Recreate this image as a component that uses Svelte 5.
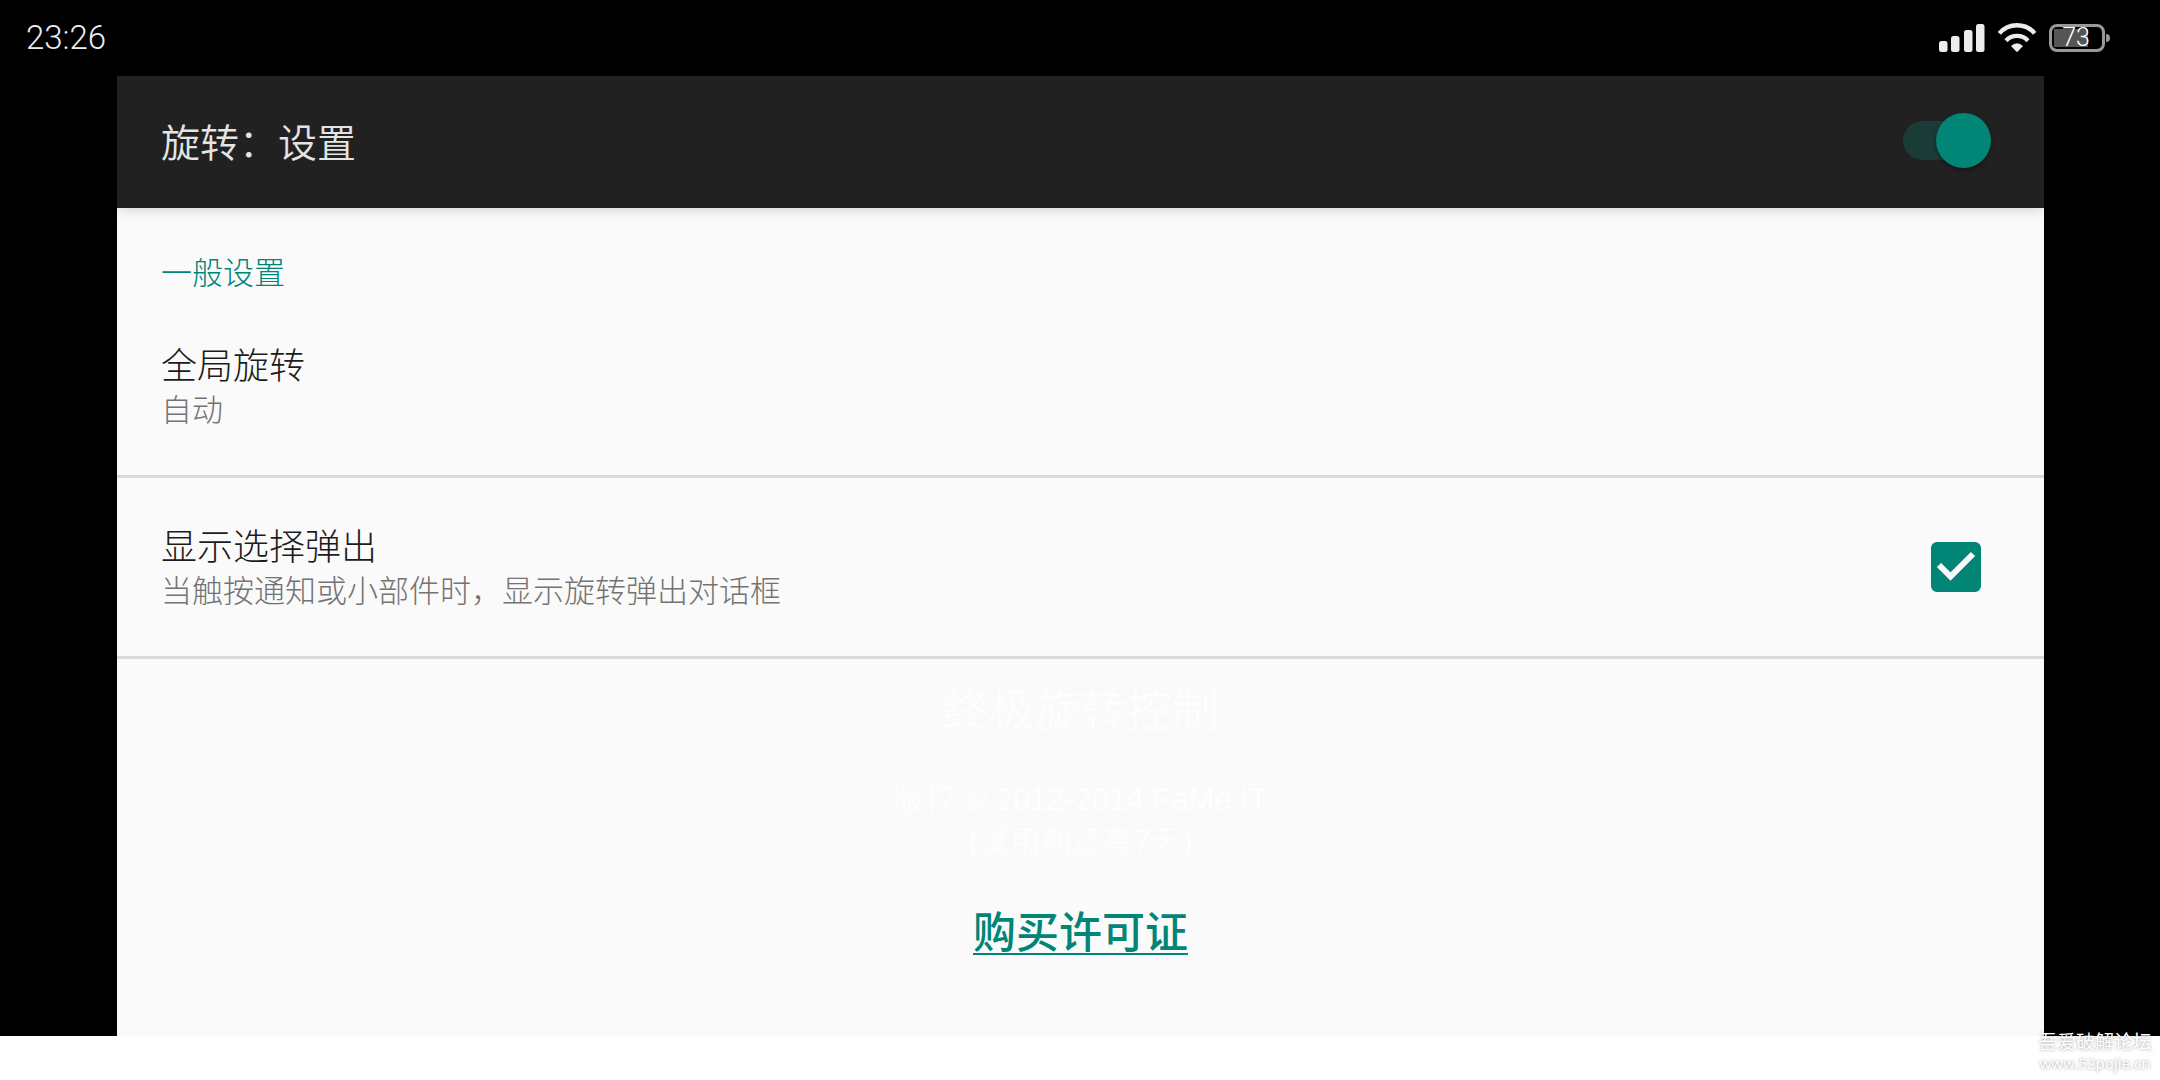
<script>
  let enabled = $state(true);
  let showPopup = $state(true);
  const bars = [
    { x: 0, y: 17, h: 11 },
    { x: 12, y: 12, h: 16 },
    { x: 25, y: 6, h: 22 },
    { x: 37, y: 0, h: 28 },
  ];
</script>

<div class="device">
  <header class="status">
    <time class="clock">23:26</time>
    <div class="indicators">
      <svg class="signal" viewBox="0 0 46 28" aria-hidden="true">
        {#each bars as bar}
          <rect x={bar.x} y={bar.y} width="8.5" height={bar.h} rx="2.5" />
        {/each}
      </svg>
      <svg class="wifi" viewBox="0 0 120 90" aria-hidden="true">
        <path class="arc" d="M7 31A70 70 0 0 1 113 31" />
        <path class="arc" d="M27 53A45 45 0 0 1 93 53" />
        <path d="M42 69Q60 52 78 69L63 85Q60 88 57 85Z" />
      </svg>
      <div class="battery">
        <span class="level">73</span>
      </div>
    </div>
  </header>

  <main class="app">
    <div class="toolbar">
      <h1>旋转：设置</h1>
      <input class="switch" type="checkbox" role="switch" aria-label="旋转" bind:checked={enabled} />
    </div>

    <h2>一般设置</h2>
    <button class="item" type="button">
      <span class="title">全局旋转</span>
      <span class="summary">自动</span>
    </button>
    <label class="item choice">
      <span class="text">
        <span class="title">显示选择弹出</span>
        <span class="summary">当触按通知或小部件时，显示旋转弹出对话框</span>
      </span>
      <span class="check">
        <input type="checkbox" bind:checked={showPopup} />
        {#if showPopup}
          <svg viewBox="0 0 50 50" aria-hidden="true"><path d="M8 23L19.500 34.500L42 12" /></svg>
        {/if}
      </span>
    </label>

    <footer>
      <p class="name">终极旋转控制</p>
      <p class="legal">版权 © 2012-2014 FaMe IT<br />(试用期还有7天)</p>
      <a href="#license">购买许可证</a>
    </footer>
  </main>
</div>

<aside class="watermark">
  <span>吾爱破解论坛</span>
  <span>www.52pojie.cn</span>
</aside>

<style>
  :global(body) {
    margin: 0;
    background: #fff;
  }
  :global(#app) {
    position: relative;
    min-height: 100vh;
    font-family: "Noto Sans CJK SC", sans-serif;
    font-weight: 300;
  }
  h1, h2, p {
    margin: 0;
    font-weight: inherit;
  }
  .device {
    background: #000;
  }
  .status {
    display: flex;
    align-items: center;
    justify-content: space-between;
    box-sizing: border-box;
    height: 76px;
    padding: 0 50px 0 26px;
    color: #ececec;
    font-family: Roboto, sans-serif;
  }
  .clock {
    font-size: 33px;
    line-height: 40px;
  }
  .indicators {
    display: flex;
    align-items: center;
    gap: 12px;
  }
  .signal {
    width: 46px;
    height: 28px;
    fill: #ececec;
  }
  .wifi {
    width: 40px;
    height: 30px;
    fill: #ececec;
  }
  .arc {
    fill: none;
    stroke: #ececec;
    stroke-width: 13;
  }
  .battery {
    position: relative;
    display: flex;
    align-items: center;
    justify-content: center;
    box-sizing: border-box;
    width: 56px;
    height: 28px;
    margin-right: 5px;
    border: 3px solid #999;
    border-radius: 8px;
    background: linear-gradient(#555, #555) 2px 2px / 34px 18px no-repeat;
  }
  .battery::after {
    content: "";
    position: absolute;
    left: 54px;
    top: 7px;
    width: 4px;
    height: 8px;
    border-radius: 0 4px 4px 0;
    background: #999;
  }
  .level {
    padding-right: 2px;
    color: #fff;
    font-size: 25px;
    line-height: 24px;
  }
  .app {
    margin: 0 116px 0 117px;
    background: #fafafa;
  }
  .toolbar {
    position: relative;
    display: flex;
    align-items: center;
    justify-content: space-between;
    box-sizing: border-box;
    height: 132px;
    padding: 0 53px 4px 44px;
    background: #212121;
    box-shadow: 0 2px 12px rgba(0, 0, 0, 0.15);
    clip-path: inset(0 0 -12px 0);
  }
  h1 {
    color: #e4e4e4;
    font-size: 39px;
    font-weight: 350;
    line-height: 56px;
  }
  .switch {
    appearance: none;
    position: relative;
    width: 88px;
    height: 54px;
    margin: 0;
  }
  .switch::before {
    content: "";
    position: absolute;
    left: 0;
    top: 8px;
    width: 80px;
    height: 39px;
    border-radius: 20px;
    background: #444;
  }
  .switch:checked::before {
    background: #1b3b36;
  }
  .switch::after {
    content: "";
    position: absolute;
    left: 0;
    top: 0;
    width: 55px;
    height: 55px;
    border-radius: 50%;
    background: #bbb;
    box-shadow: 0 2px 4px rgba(0, 0, 0, 0.4);
  }
  .switch:checked::after {
    left: 33px;
    background: #008577;
  }
  h2 {
    padding: 42px 44px 5px;
    color: #008577;
    font-size: 31px;
    line-height: 42px;
  }
  .item {
    display: block;
    box-sizing: border-box;
    width: 100%;
    padding: 42px 44px 46px;
    border: 0;
    border-bottom: 3px solid #dadada;
    background: none;
    font: inherit;
    text-align: left;
  }
  .choice {
    display: flex;
    justify-content: space-between;
    padding-right: 63px;
  }
  .title,
  .summary {
    display: block;
  }
  .title {
    color: #1c1c1c;
    font-size: 36px;
    line-height: 48px;
  }
  .summary {
    color: #737373;
    font-size: 31px;
    line-height: 42px;
  }
  .check {
    position: relative;
    width: 50px;
    height: 50px;
    margin-top: 22px;
  }
  .check input {
    appearance: none;
    display: block;
    box-sizing: border-box;
    width: 50px;
    height: 50px;
    margin: 0;
    border: 5px solid #737373;
    border-radius: 6px;
  }
  .check input:checked {
    border-color: #008577;
    background: #008577;
  }
  .check svg {
    position: absolute;
    inset: 0;
    fill: none;
    stroke: #fafafa;
    stroke-width: 6;
    pointer-events: none;
  }
  footer {
    padding: 16px 45px 79px;
    color: #fefefe;
    text-align: center;
  }
  .name {
    font-size: 46px;
    line-height: 62px;
  }
  .legal {
    margin: 42px 0 38px;
    font-family: "Liberation Sans", "Noto Sans CJK SC", sans-serif;
    font-size: 31px;
    line-height: 42px;
  }
  a {
    display: inline-block;
    color: #008577;
    font-size: 43px;
    font-weight: 500;
    line-height: 56px;
    text-decoration-thickness: 2px;
    text-underline-offset: 5px;
  }
  .watermark {
    position: absolute;
    right: 8px;
    bottom: 6px;
    display: grid;
    justify-items: center;
    color: #fff;
    font-size: 19px;
    font-weight: 400;
    line-height: 22px;
    text-shadow: 0 0 3px rgba(0, 0, 0, 0.4);
  }
  .watermark span:last-child {
    font-family: "Noto Sans", sans-serif;
    font-size: 15px;
  }
</style>
